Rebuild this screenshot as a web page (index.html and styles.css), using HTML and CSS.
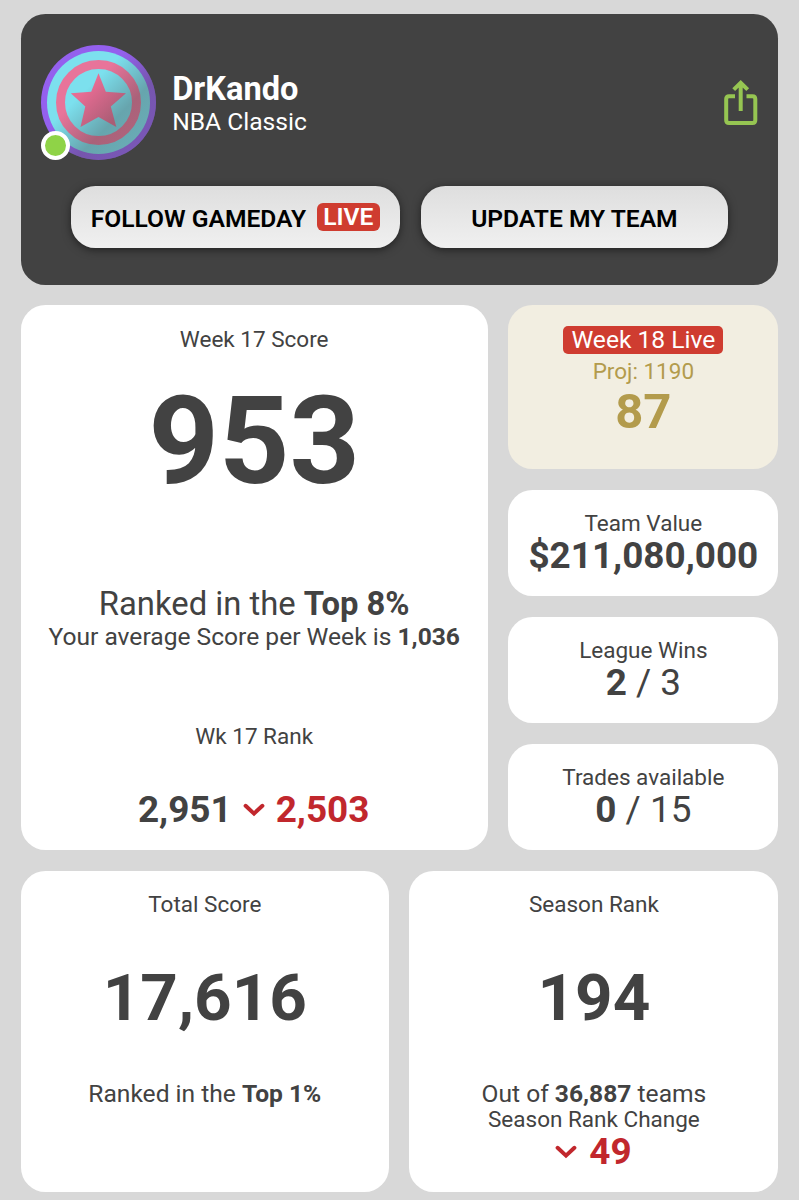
FILE: index.html
```html
<!DOCTYPE html>
<html lang="en">
<head>
    <meta charset="UTF-8">
    <meta name="viewport" content="width=device-width, initial-scale=1.0">
    <title>DrKando - NBA Classic</title>
    <link rel="stylesheet" href="styles.css">
</head>
<body>
    <div class="container">
        <div class="header">
            <div class="profile">
                <div class="avatar">
                    <svg width="115" height="115" viewBox="0 0 115 115">
                        <defs>
                            <linearGradient id="shade" x1="0.1" y1="0.1" x2="0.9" y2="0.9">
                                <stop offset="0.36" stop-color="#444" stop-opacity="0"/>
                                <stop offset="0.68" stop-color="#444" stop-opacity="0.38"/>
                                <stop offset="1" stop-color="#444" stop-opacity="0.32"/>
                            </linearGradient>
                        </defs>
                        <circle cx="57.5" cy="57.5" r="57.5" fill="#9460ee"/>
                        <circle cx="57.5" cy="57.5" r="51.5" fill="#7ce0ee"/>
                        <circle cx="57.5" cy="57.5" r="38" fill="none" stroke="#e8749a" stroke-width="9"/>
                        <path d="M57.5 28.3 L64.8 46.8 L85 48.3 L69.8 61.5 L75.3 82 L57.5 72 L39.5 82 L44.3 61.5 L29.8 48.3 L50.2 46.8 Z" fill="#e86c93"/>
                        <circle cx="57.5" cy="57.5" r="57.5" fill="url(#shade)"/>
                    </svg>
                    <span class="online"></span>
                </div>
                <div class="user">
                    <h1>DrKando</h1>
                    <p>NBA Classic</p>
                </div>
                <svg class="share" width="34" height="46" viewBox="0 0 34 46" fill="none" stroke="#96c552" stroke-width="4">
                    <path d="M11 16.3 H5 Q2.2 16.3 2.2 19.1 V40.2 Q2.2 43 5 43 H28.5 Q31.3 43 31.3 40.2 V19.1 Q31.3 16.3 28.5 16.3 H22.5"/>
                    <path d="M16.7 31 V3.5 M9.7 9.7 L16.7 2.8 L23.7 9.7"/>
                </svg>
            </div>
            <div class="actions">
                <button class="btn btn-live">FOLLOW GAMEDAY <span class="live">LIVE</span></button>
                <button class="btn btn-team">UPDATE MY TEAM</button>
            </div>
        </div>

        <div class="stats">
            <div class="card week">
                <div class="label">Week 17 Score</div>
                <div class="score">953</div>
                <div class="ranked">Ranked in the <b>Top 8%</b></div>
                <div class="text average">Your average Score per Week is <b>1,036</b></div>
                <div class="label week-rank">Wk 17 Rank</div>
                <div class="value change">
                    <b>2,951</b>
                    <svg class="arrow" width="22" height="14" viewBox="0 0 22 14"><path d="M2.6 2.8 L11 10.6 L19.4 2.8"/></svg>
                    <b class="down">2,503</b>
                </div>
            </div>
            <div class="side">
                <div class="card projection">
                    <div class="week-live">Week 18 Live</div>
                    <div class="label proj">Proj: 1190</div>
                    <div class="points">87</div>
                </div>
                <div class="card small">
                    <div class="label">Team Value</div>
                    <div class="value"><b>$211,080,000</b></div>
                </div>
                <div class="card small">
                    <div class="label">League Wins</div>
                    <div class="value"><b>2</b> / 3</div>
                </div>
                <div class="card small">
                    <div class="label">Trades available</div>
                    <div class="value"><b>0</b> / 15</div>
                </div>
            </div>
        </div>

        <div class="totals">
            <div class="card">
                <div class="label">Total Score</div>
                <div class="total">17,616</div>
                <div class="text">Ranked in the <b>Top 1%</b></div>
            </div>
            <div class="card">
                <div class="label">Season Rank</div>
                <div class="total">194</div>
                <div class="text">Out of <b>36,887</b> teams</div>
                <div class="label">Season Rank Change</div>
                <div class="value change season-change">
                    <svg class="arrow" width="22" height="14" viewBox="0 0 22 14"><path d="M2.6 2.8 L11 10.6 L19.4 2.8"/></svg>
                    <b class="down">49</b>
                </div>
            </div>
        </div>
    </div>
</body>
</html>
```
FILE: styles.css
```css
* { box-sizing: border-box; }
body { margin: 0; background: #d8d8d8; color: #424242; font-family: Roboto, "Liberation Sans", sans-serif; }
h1, p { margin: 0; }
b { font-weight: 700; }

.container { padding: 14px 20.6px 0; display: flex; flex-direction: column; gap: 20.5px; }

.header { height: 270.5px; padding: 31px 20.4px 0; background: #424242; border-radius: 24.5px; color: white; }
.profile { display: flex; align-items: flex-start; height: 115px; }
.avatar { position: relative; width: 115px; height: 115px; }
.avatar svg { display: block; }
.online { position: absolute; left: 0; bottom: 0; width: 29px; height: 29px; background: #8fd347; border: 4px solid white; border-radius: 50%; }
.user { flex: 1; padding: 25px 0 0 16.2px; }
.user h1 { font-size: 32.6px; line-height: 38px; font-weight: 700; }
.user p { font-size: 24.6px; line-height: 27px; }
.share { margin-top: 35px; }

.actions { display: flex; justify-content: center; gap: 20.8px; margin-top: 26px; }
.btn { display: flex; align-items: center; justify-content: center; height: 62px; padding: 2px 0 0; border: none; border-radius: 24.5px; background: linear-gradient(#dedede, #f0f0f0); box-shadow: 0 2px 8px rgba(0, 0, 0, 0.5); color: black; font-family: inherit; font-size: 24.6px; font-weight: 600; }
.btn-live { width: 329px; }
.btn-team { width: 307.5px; }
.live { height: 28.5px; margin: -2px 0 0 10.5px; padding: 0 6.5px; line-height: 28.5px; border-radius: 6px; background: #cf3c30; color: white; }

.card { background: white; border-radius: 24.5px; padding-top: 20.5px; text-align: center; white-space: nowrap; }
.label { font-size: 22.5px; line-height: 26px; }
.text { font-size: 24.6px; line-height: 26px; }
.value { font-size: 36.9px; line-height: 39px; }
.down { color: #c1272d; }
.change { display: flex; align-items: center; justify-content: center; }
.arrow { margin: 0 11px; fill: none; stroke: #c1272d; stroke-width: 4; stroke-linecap: round; }

.stats { display: grid; grid-template-columns: 467.2px 1fr; gap: 20.5px; height: 545px; }
.score { margin-top: 20.4px; font-size: 122.9px; line-height: 138px; font-weight: 700; }
.ranked { margin-top: 75.2px; font-size: 32.8px; line-height: 38px; }
.average { line-height: 28px; }
.week-rank { margin-top: 72px; }
.week .change { margin-top: 41px; padding-right: 1px; }

.side { display: flex; flex-direction: column; gap: 20.5px; }
.projection { height: 164px; background: #f2eee1; color: #b39b4c; }
.week-live { display: inline-block; height: 28.5px; padding: 0 8px; border-radius: 5px; background: #cf3c30; color: white; font-size: 24.6px; line-height: 27.5px; vertical-align: top; }
.proj { margin-top: 4px; }
.points { font-size: 49px; line-height: 55px; font-weight: 700; }
.small { flex: 1; }

.totals { display: grid; grid-template-columns: 368.4px 1fr; gap: 20.4px; height: 321px; }
.total { margin-top: 41px; font-size: 65.6px; line-height: 80px; font-weight: 700; }
.totals .text { margin-top: 43px; line-height: 26px; }
.totals .text + .label { line-height: 25px; }
.season-change { padding-right: 12px; }
.season-change .arrow { margin-right: 12px; }
```
